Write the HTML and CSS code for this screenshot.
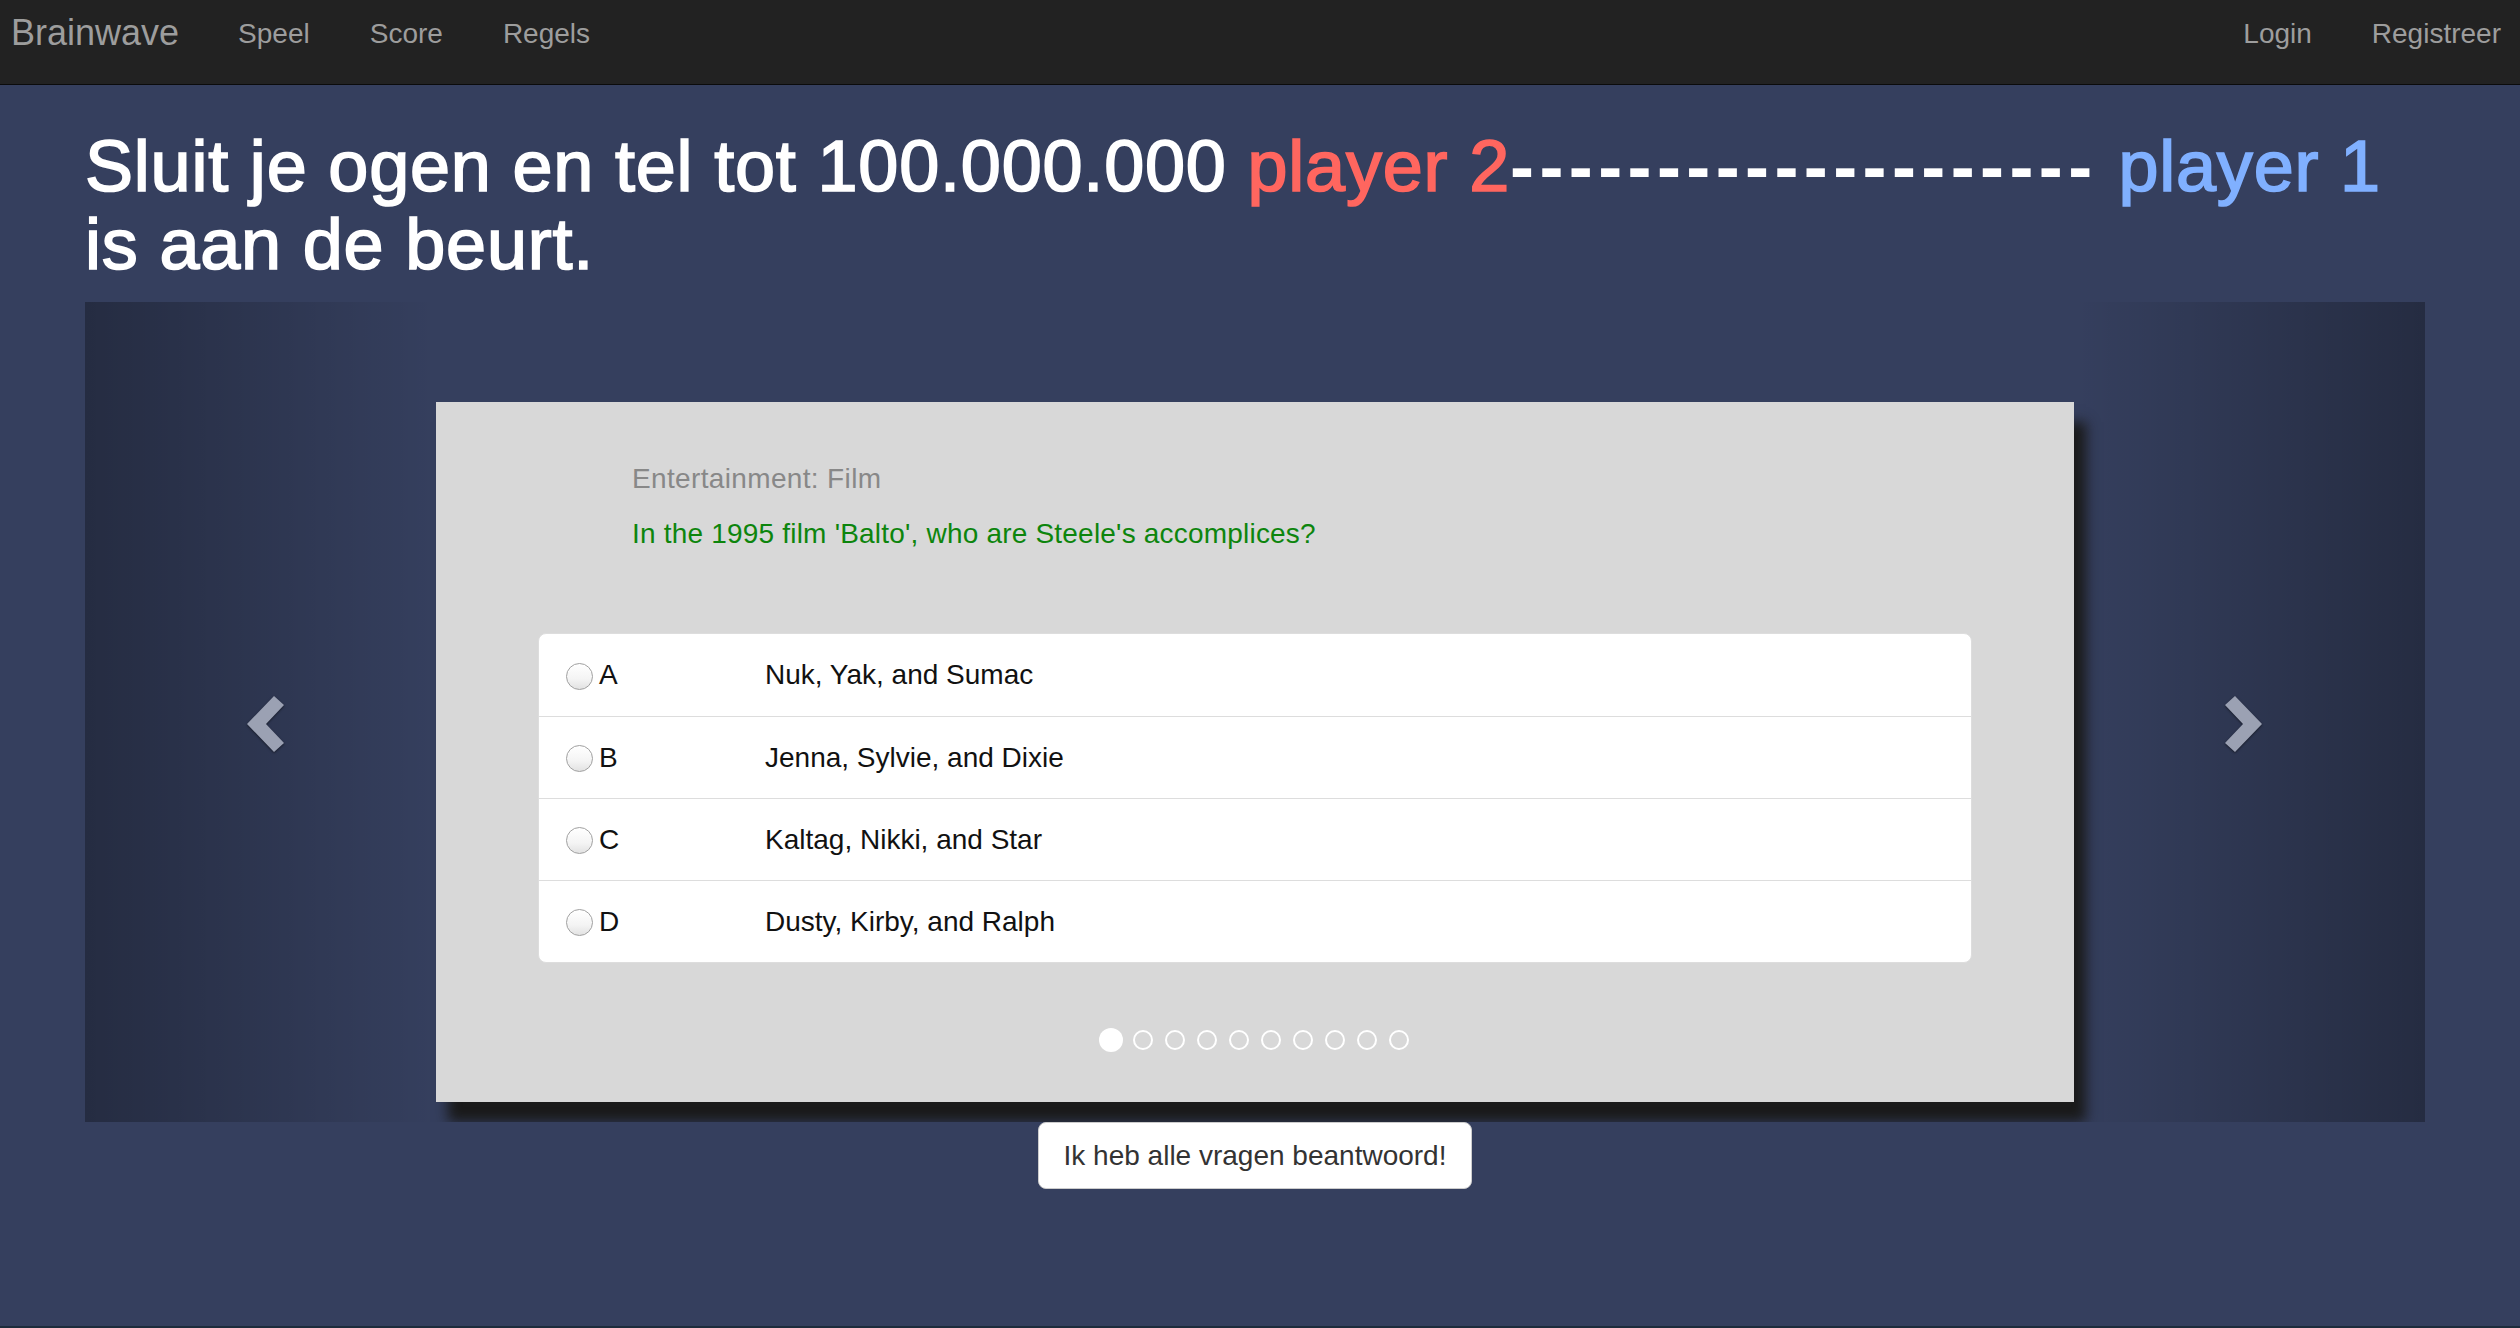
FILE: index.html
```html
<!DOCTYPE html>
<html lang="nl">
<head>
<meta charset="utf-8">
<title>Brainwave</title>
<link rel="stylesheet" href="styles.css">
</head>
<body>
<div class="page">
  <nav class="navbar">
    <div class="nav-left">
      <a class="brand" href="#">Brainwave</a>
      <ul class="nav-links">
        <li><a href="#">Speel</a></li>
        <li><a href="#">Score</a></li>
        <li><a href="#">Regels</a></li>
      </ul>
    </div>
    <ul class="nav-links nav-right">
      <li><a href="#">Login</a></li>
      <li><a href="#">Registreer</a></li>
    </ul>
  </nav>

  <main class="container">
    <h1 class="turn">Sluit je ogen en tel tot 100.000.000 <span class="p2">player 2</span><span class="dashes">--------------------</span> <span class="p1">player 1</span> is aan de beurt.</h1>

    <div class="carousel">
      <a class="control control-left" href="#" aria-label="Vorige">
        <svg class="chev chev-left" viewBox="0 0 37 56" width="37" height="56"><polygon points="0,28 27,0 37,9 19,28 37,47 27,56"/></svg>
      </a>
      <a class="control control-right" href="#" aria-label="Volgende">
        <svg class="chev chev-right" viewBox="0 0 37 56" width="37" height="56"><polygon points="37,28 10,0 0,9 18,28 0,47 10,56"/></svg>
      </a>

      <section class="card">
        <div class="card-head">
          <p class="category">Entertainment: Film</p>
          <p class="question">In the 1995 film 'Balto', who are Steele's accomplices?</p>
        </div>
        <ul class="answers">
          <li class="answer"><input type="radio" name="q1" class="radio"><span class="letter">A</span><span class="text">Nuk, Yak, and Sumac</span></li>
          <li class="answer"><input type="radio" name="q1" class="radio"><span class="letter">B</span><span class="text">Jenna, Sylvie, and Dixie</span></li>
          <li class="answer"><input type="radio" name="q1" class="radio"><span class="letter">C</span><span class="text">Kaltag, Nikki, and Star</span></li>
          <li class="answer"><input type="radio" name="q1" class="radio"><span class="letter">D</span><span class="text">Dusty, Kirby, and Ralph</span></li>
        </ul>
        <ol class="indicators">
          <li class="dot active"></li>
          <li class="dot"></li>
          <li class="dot"></li>
          <li class="dot"></li>
          <li class="dot"></li>
          <li class="dot"></li>
          <li class="dot"></li>
          <li class="dot"></li>
          <li class="dot"></li>
          <li class="dot"></li>
        </ol>
      </section>
    </div>

    <div class="actions">
      <button class="btn" type="button">Ik heb alle vragen beantwoord!</button>
    </div>
  </main>
  <div class="bottom-line"></div>
</div>
</body>
</html>
```

FILE: styles.css
```css
* { box-sizing: border-box; }

html, body {
  margin: 0;
  padding: 0;
}

body {
  background: #353f5e;
  font-family: "Liberation Sans", Arial, Helvetica, sans-serif;
  color: #333;
}

.page {
  min-height: 100vh;
  display: flex;
  flex-direction: column;
}

/* ---------- navbar ---------- */
.navbar {
  height: 85px;
  background: #222222;
  border-bottom: 1px solid #0b0b0b;
  display: flex;
  justify-content: space-between;
  align-items: flex-start;
  padding: 13px 19px 0 11px;
}

.nav-left {
  display: flex;
  align-items: flex-start;
}

.brand {
  font-size: 36px;
  line-height: 40px;
  color: #9d9d9d;
  text-decoration: none;
  margin-right: 59px;
}

.nav-links {
  list-style: none;
  margin: 0;
  padding: 0;
  display: flex;
  gap: 60px;
}

.nav-links a {
  display: block;
  font-size: 28px;
  line-height: 40px;
  margin-top: 1px;
  color: #9d9d9d;
  text-decoration: none;
}

/* ---------- main ---------- */
.container {
  width: 2340px;
  margin-left: 85px;
}

.turn {
  margin: 43px 0 19px;
  font-size: 72px;
  line-height: 77.5px;
  font-weight: 400;
  letter-spacing: 0.8px;
  color: #ffffff;
  -webkit-text-stroke: 1.7px currentColor;
}

.p2 { color: #ff665f; }
.p1 { color: #80b0ff; }
.dashes {
  font-weight: 700;
  letter-spacing: 5.4px;
  -webkit-text-stroke: 0;
}

/* ---------- carousel ---------- */
.carousel {
  position: relative;
  height: 820px;
  overflow: hidden;
}

.control {
  position: absolute;
  top: 0;
  bottom: 0;
  width: 15%;
  display: block;
}

.control-left {
  left: 0;
  background: linear-gradient(to right, rgba(0, 0, 0, 0.3) 0%, rgba(0, 0, 0, 0) 100%);
}

.control-right {
  right: 0;
  background: linear-gradient(to left, rgba(0, 0, 0, 0.3) 0%, rgba(0, 0, 0, 0) 100%);
}

.chev {
  position: absolute;
  top: 50%;
  margin-top: -16px;
  fill: #9ba1b3;
  filter: drop-shadow(0 1px 1px rgba(0, 0, 0, 0.5));
}

.chev-left { left: 162px; }
.chev-right { left: 151px; }

.card {
  width: 70%;
  height: 700px;
  margin: 100px auto 0;
  background: #d8d8d8;
  box-shadow: 12px 20px 12px #1a1a1a;
  padding: 57px 102px 50px;
  display: flex;
  flex-direction: column;
}

.card-head {
  padding-left: 94px;
}

.category {
  margin: 0;
  font-size: 28px;
  line-height: 40px;
  letter-spacing: 0.35px;
  color: #888888;
}

.question {
  margin: 15px 0 0;
  font-size: 28px;
  line-height: 40px;
  letter-spacing: 0.2px;
  color: #0d850d;
}

.answers {
  list-style: none;
  margin: 79px 0 0;
  padding: 0;
  background: #ffffff;
  border: 1px solid #dddddd;
  border-radius: 8px;
}

.answer {
  height: 82px;
  display: flex;
  align-items: center;
  padding: 0 27px;
  font-size: 28px;
  line-height: 40px;
  color: #111111;
}

.answer + .answer {
  border-top: 1px solid #dddddd;
}

.radio {
  appearance: none;
  -webkit-appearance: none;
  width: 27px;
  height: 27px;
  margin: 2px 6px 0 0;
  border-radius: 50%;
  border: 1px solid #a0a0a0;
  background: linear-gradient(to bottom, #ffffff 0%, #f4f4f4 60%, #e2e2e2 100%);
  box-shadow: inset 0 1px 1px rgba(255, 255, 255, 0.8);
  flex: none;
}

.letter {
  width: 166px;
  flex: none;
}

.text {
  flex: 1;
}

.indicators {
  list-style: none;
  margin: 65px 0 0;
  padding: 0;
  display: flex;
  justify-content: center;
  align-items: center;
  gap: 8px;
  height: 24px;
}

.dot {
  width: 20px;
  height: 20px;
  margin: 2px;
  border: 2px solid #ffffff;
  border-radius: 50%;
}

.dot.active {
  width: 24px;
  height: 24px;
  margin: 0;
  background: #ffffff;
  border: 0;
}

/* ---------- button ---------- */
.actions {
  display: flex;
  justify-content: center;
}

.btn {
  font-family: "Liberation Sans", Arial, Helvetica, sans-serif;
  font-size: 28px;
  line-height: 40px;
  color: #333333;
  background: #ffffff;
  border: 1px solid #cccccc;
  border-radius: 8px;
  padding: 13px 25px 12px;
  cursor: pointer;
}

.bottom-line {
  margin-top: auto;
  height: 2px;
  background: #1d2c3c;
}
```
